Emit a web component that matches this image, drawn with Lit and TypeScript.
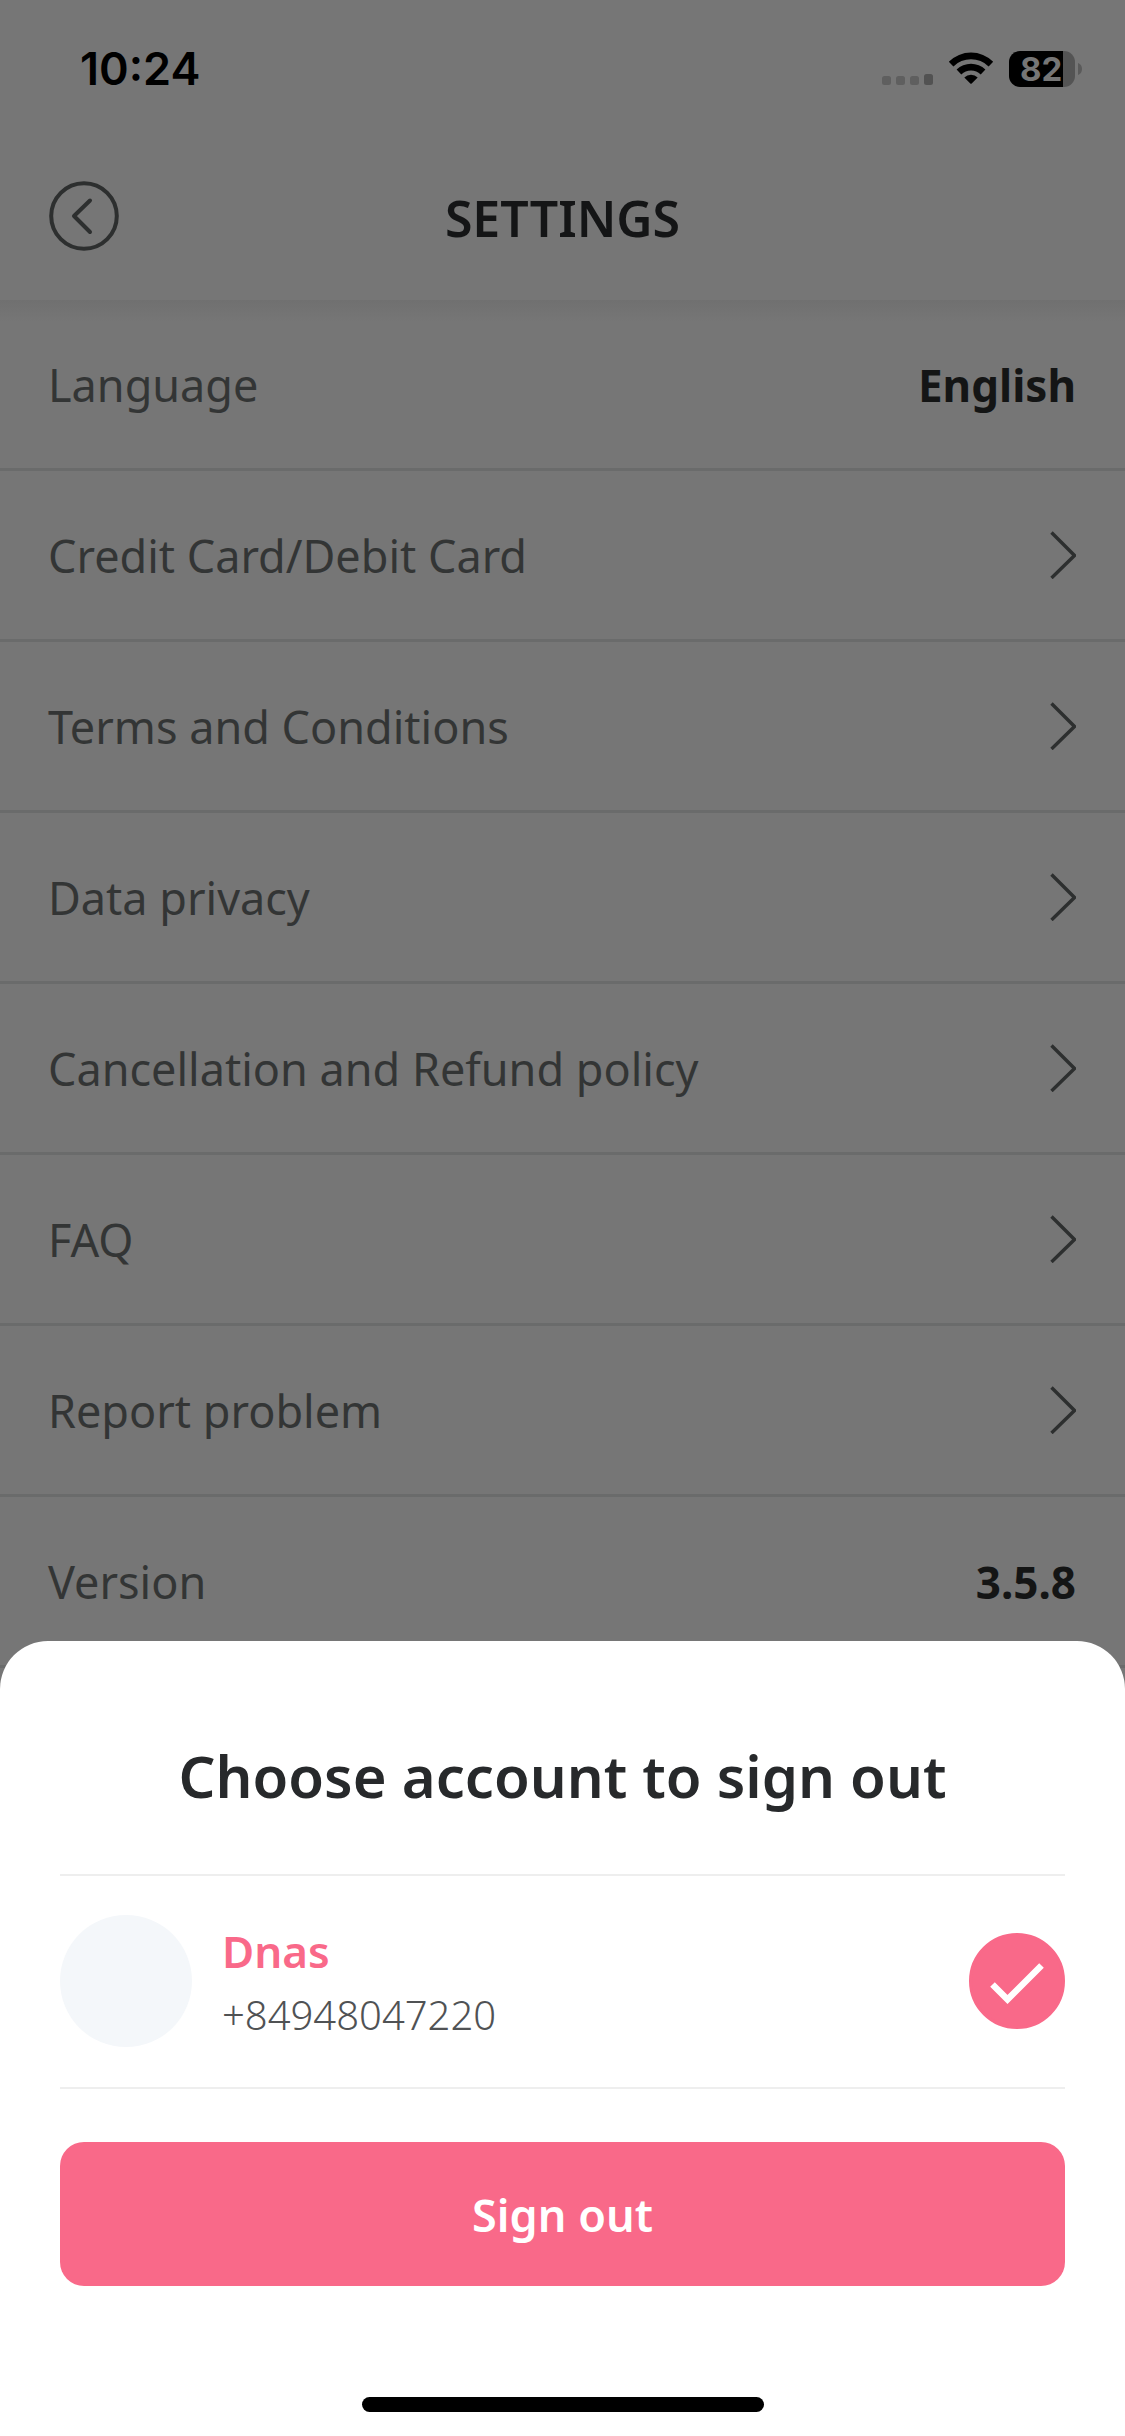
import { LitElement, html, css } from "lit";
import { customElement, property, state } from "lit/decorators.js";

interface SettingsItem {
  label: string;
  value?: string;
}

const ITEMS: SettingsItem[] = [
  { label: "Language", value: "English" },
  { label: "Credit Card/Debit Card" },
  { label: "Terms and Conditions" },
  { label: "Data privacy" },
  { label: "Cancellation and Refund policy" },
  { label: "FAQ" },
  { label: "Report problem" },
  { label: "Version", value: "3.5.8" },
];

@customElement("status-bar")
export class StatusBar extends LitElement {
  static styles = css`
    :host {
      display: flex;
      justify-content: space-between;
      align-items: center;
      height: 138px;
      padding: 0 43px 0 80px;
      box-sizing: border-box;
      font-family: Inter, "Liberation Sans", sans-serif;
      color: #000;
    }
    .time {
      font-size: 45px;
      line-height: 56px;
      font-weight: 600;
    }
    .icons {
      display: flex;
      align-items: center;
      gap: 15px;
    }
    .signal,
    .wifi,
    .nub {
      display: block;
    }
    .battery {
      display: flex;
      align-items: center;
      gap: 3px;
    }
    .level {
      width: 66px;
      height: 36px;
      box-sizing: border-box;
      padding-left: 11px;
      border-radius: 11px;
      background: linear-gradient(to right, #000 54px, #545454 54px);
      color: #767676;
      font-size: 33px;
      line-height: 36px;
      font-weight: 700;
    }
  `;

  render() {
    return html`
      <span class="time">10:24</span>
      <div class="icons">
        <svg class="signal" width="51" height="34" viewBox="0 0 51 34" aria-hidden="true">
          <rect x="0" y="24" width="9" height="9" rx="2.5" fill="#5f5f5f" />
          <rect x="14" y="24" width="9" height="9" rx="2.5" fill="#5f5f5f" />
          <rect x="28" y="24" width="9" height="9" rx="2.5" fill="#5f5f5f" />
          <rect x="42" y="22" width="9" height="11" rx="2.5" fill="#525252" />
        </svg>
        <svg class="wifi" width="46" height="34" viewBox="0 0 46 34" aria-hidden="true">
          <path d="M0.8 9.7A31.6 31.6 0 0 1 45.2 9.7L40.6 14.4A25 25 0 0 0 5.4 14.4Z" />
          <path d="M8.6 17.6A20.6 20.6 0 0 1 37.4 17.6L32.7 22.4A13.9 13.9 0 0 0 13.3 22.4Z" />
          <path d="M16.3 25.4A9.6 9.6 0 0 1 29.7 25.4L23.7 31.5Q23 32.2 22.3 31.5Z" />
        </svg>
        <div class="battery">
          <div class="level">82</div>
          <svg class="nub" width="4" height="12" viewBox="0 0 4 12" aria-hidden="true">
            <path d="M0 0Q4 1.5 4 6Q4 10.5 0 12Z" fill="#5a5a5a" />
          </svg>
        </div>
      </div>
    `;
  }
}

@customElement("settings-row")
export class SettingsRow extends LitElement {
  @property() label = "";
  @property() value = "";

  static styles = css`
    :host {
      display: block;
      border-bottom: 3px solid #6a6b6b;
    }
    .row {
      display: flex;
      justify-content: space-between;
      align-items: center;
      width: 100%;
      min-height: 168px;
      box-sizing: border-box;
      padding: 0 49px 0 48px;
      border: 0;
      background: none;
      font: inherit;
      color: inherit;
      text-align: left;
      text-decoration: none;
    }
    .label,
    .value {
      padding-top: 2px;
    }
    .label {
      font-size: 45px;
      font-weight: 400;
      color: #333535;
    }
    .value {
      font-weight: 700;
      color: #141515;
    }
    .chevron {
      display: block;
      flex: none;
    }
  `;

  render() {
    if (this.value) {
      return html`
        <div class="row">
          <span class="label">${this.label}</span>
          <span class="value">${this.value}</span>
        </div>
      `;
    }
    return html`
      <a class="row" href="#">
        <span class="label">${this.label}</span>
        <svg class="chevron" width="26" height="48" viewBox="0 0 26 48" aria-hidden="true">
          <path d="M1.5 1.5L24.5 24.5L1.5 47" fill="none" stroke="#2d2f2f" stroke-width="3.4" />
        </svg>
      </a>
    `;
  }
}

@customElement("sign-out-sheet")
export class SignOutSheet extends LitElement {
  @state() private checked = true;

  static styles = css`
    :host {
      display: flex;
      flex-direction: column;
      box-sizing: border-box;
      padding: 97px 60px 24px;
      border-radius: 48px 48px 0 0;
      background: #fff;
    }
    .title {
      margin: 0 0 60px;
      font-size: 58px;
      line-height: 76px;
      font-weight: 600;
      text-align: center;
      color: #27292b;
    }
    .account {
      display: flex;
      align-items: center;
      gap: 30px;
      padding: 39px 0 40px;
      border-top: 2px solid #eeeeee;
      border-bottom: 2px solid #eeeeee;
    }
    .avatar {
      flex: none;
      width: 132px;
      height: 132px;
      border-radius: 50%;
      background: #f4f7fa;
    }
    .who {
      flex: 1;
      display: flex;
      flex-direction: column;
      padding-top: 4px;
    }
    .name {
      font-size: 44px;
      line-height: 64px;
      font-weight: 600;
      color: #f96989;
    }
    .phone {
      font-size: 40px;
      line-height: 64px;
      font-weight: 300;
      color: #505254;
    }
    .pick {
      display: grid;
      flex: none;
    }
    .box,
    .tick {
      grid-area: 1 / 1;
      display: block;
      width: 96px;
      height: 96px;
      margin: 0;
    }
    .box {
      appearance: none;
      box-sizing: border-box;
      border: 3px solid #f96989;
      border-radius: 50%;
    }
    .box:checked {
      background: #f96989;
    }
    .tick {
      pointer-events: none;
    }
    .submit {
      margin: 53px 0 111px;
      padding: 35px 0 33px;
      border: 0;
      border-radius: 24px;
      background: #f96989;
      color: #fff;
      font-family: inherit;
      font-size: 45px;
      line-height: 76px;
      font-weight: 600;
    }
    .home {
      align-self: center;
      width: 40%;
      max-width: 402px;
      height: 15px;
      border-radius: 8px;
      background: #000;
    }
  `;

  private toggle(e: Event) {
    this.checked = (e.target as HTMLInputElement).checked;
  }

  render() {
    return html`
      <h2 class="title">Choose account to sign out</h2>
      <label class="account" for="account">
        <span class="avatar"></span>
        <span class="who">
          <span class="name">Dnas</span>
          <span class="phone">+84948047220</span>
        </span>
        <span class="pick">
          <input class="box" id="account" type="checkbox" .checked=${this.checked} @change=${this.toggle} />
          <svg class="tick" viewBox="0 0 96 96" aria-hidden="true">
            <path d="M23.5 51.5L38.5 66.5L72.5 32.5" fill="none" stroke="#fff" stroke-width="6.5" />
          </svg>
        </span>
      </label>
      <button class="submit" type="button">Sign out</button>
      <div class="home"></div>
    `;
  }
}

@customElement("app-root")
export class AppRoot extends LitElement {
  static styles = css`
    :host {
      display: block;
      position: relative;
      min-height: 100vh;
      overflow: hidden;
      background: #767676;
      font-family: "Noto Sans", "Open Sans", sans-serif;
      font-size: 44px;
      line-height: 60px;
    }
    .bar {
      display: grid;
      grid-template-columns: 1fr auto 1fr;
      align-items: center;
      height: 162px;
      box-sizing: border-box;
      padding: 0 49px 6px;
    }
    .back {
      justify-self: start;
      padding: 0;
      border: 0;
      background: none;
    }
    .back-icon {
      display: block;
    }
    .title {
      margin: 0;
      padding-top: 4px;
      font-size: 50px;
      line-height: 60px;
      font-weight: 600;
      color: #141516;
    }
    .list {
      background: linear-gradient(#707070, #767676 22px);
    }
    .sheet {
      position: absolute;
      left: 0;
      right: 0;
      bottom: 0;
    }
  `;

  render() {
    return html`
      <status-bar></status-bar>
      <header class="bar">
        <button class="back" type="button" aria-label="Back">
          <svg class="back-icon" width="70" height="70" viewBox="0 0 70 70" aria-hidden="true">
            <circle cx="35" cy="35" r="32.8" fill="none" stroke="#2d2f2f" stroke-width="4" />
            <path d="M41 19.5L25 35L41 51" fill="none" stroke="#2d2f2f" stroke-width="4" stroke-linecap="round" stroke-linejoin="round" />
          </svg>
        </button>
        <h1 class="title">SETTINGS</h1>
      </header>
      <main class="list">
        ${ITEMS.map(
          (item) => html`<settings-row .label=${item.label} .value=${item.value ?? ""}></settings-row>`,
        )}
      </main>
      <sign-out-sheet class="sheet"></sign-out-sheet>
    `;
  }
}
